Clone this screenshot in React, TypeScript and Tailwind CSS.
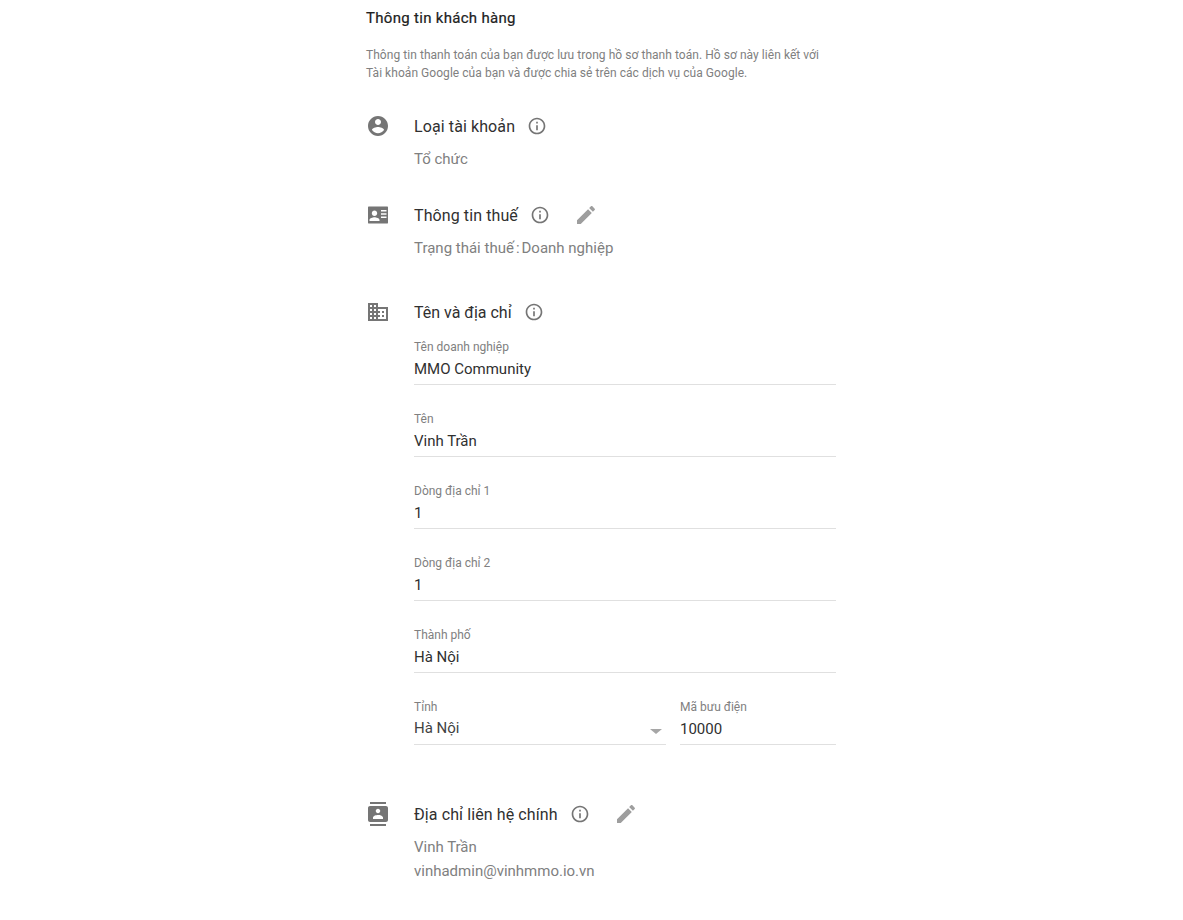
const paths = {
  account:
    'M12 2C6.48 2 2 6.48 2 12s4.48 10 10 10 10-4.48 10-10S17.52 2 12 2zm0 3c1.66 0 3 1.34 3 3s-1.34 3-3 3-3-1.34-3-3 1.34-3 3-3zm0 14.2c-2.5 0-4.71-1.28-6-3.22.03-1.99 4-3.08 6-3.08 1.99 0 5.97 1.09 6 3.08-1.29 1.94-3.5 3.22-6 3.22z',
  info: 'M11 7h2v2h-2zm0 4h2v6h-2zm1-9C6.48 2 2 6.48 2 12s4.48 10 10 10 10-4.48 10-10S17.52 2 12 2zm0 18c-4.41 0-8-3.59-8-8s3.59-8 8-8 8 3.59 8 8-3.59 8-8 8z',
  edit: 'M3 17.25V21h3.75L17.81 9.94l-3.75-3.75L3 17.25zM20.71 7.04c.39-.39.39-1.02 0-1.41l-2.34-2.34c-.39-.39-1.02-.39-1.41 0l-1.83 1.83 3.75 3.75 1.83-1.83z',
  tax: 'M21 3.500H3C2 3.500 2 4 2 5v14c0 1 0 1.500 1 1.500h18c1 0 1-.5 1-1.500V5c0-1 0-1.500-1-1.500zM8.500 7.500c1.500 0 2.700 1.200 2.700 2.700s-1.200 2.700-2.700 2.700-2.700-1.200-2.700-2.700 1.200-2.700 2.700-2.700zm5 10.500H3.500v-1c0-1.800 3.300-2.700 5-2.700s5 .9 5 2.700v1zm7-9.500h-5.500V7h5.500v1.500zm0 3.200h-5.500v-1.500h5.500v1.500zm0 3.200h-5.500v-1.500h5.500v1.500z',
  domain:
    'M12 7V3H2v18h20V7H12zM6 19H4v-2h2v2zm0-4H4v-2h2v2zm0-4H4V9h2v2zm0-4H4V5h2v2zm4 12H8v-2h2v2zm0-4H8v-2h2v2zm0-4H8V9h2v2zm0-4H8V5h2v2zm10 12h-8v-2h2v-2h-2v-2h2v-2h-2V9h8v10zm-2-8h-2v2h2v-2zm0 4h-2v2h2v-2z',
  contacts:
    'M20 0H4v2h16V0zM4 24h16v-2H4v2zM20 4H4c-1.100 0-2 .9-2 2v12c0 1.100.9 2 2 2h16c1.100 0 2-.9 2-2V6c0-1.100-.9-2-2-2zm-8 2.750c1.240 0 2.250 1.010 2.250 2.250s-1.010 2.250-2.250 2.250S9.750 10.240 9.750 9 10.760 6.750 12 6.750zM17 17H7v-1.500c0-1.670 3.330-2.500 5-2.500s5 .83 5 2.500V17z',
};

function Icon({ d, className }: { d: string; className: string }) {
  return (
    <svg viewBox="0 0 24 24" className={className} fill="currentColor">
      <path d={d} />
    </svg>
  );
}

function SectionHead({ icon, title, edit, tight }: { icon: string; title: string; edit?: boolean; tight?: boolean }) {
  return (
    <div className="flex items-center h-6">
      <div className="w-12 shrink-0">
        <Icon d={icon} className="w-6 h-6 text-[#757575]" />
      </div>
      <span className={`text-base pt-[2px] text-[#303030] ${tight ? 'tracking-[0px]' : 'tracking-[0.1px]'}`}>{title}</span>
      <Icon d={paths.info} className="w-5 h-5 ml-3 text-[#757575]" />
      {edit && <Icon d={paths.edit} className="w-6 h-6 ml-6 text-[#9e9e9e]" />}
    </div>
  );
}

function Field({ label, value, className, valueClass }: { label: string; value: string; className?: string; valueClass?: string }) {
  return (
    <div className={`h-[46px] border-b border-[#e0e0e0] ${className ?? ''}`}>
      <div className="text-xs leading-4 text-[#808080]">{label}</div>
      <div className={`text-[15px] leading-6 ${valueClass ?? 'mt-[2px] text-[#303030]'}`}>{value}</div>
    </div>
  );
}

export default function App() {
  return (
    <div className="min-h-[920px] bg-white font-['Roboto',sans-serif] pl-[366px] overflow-hidden">
      <div className="w-[470px]">
        <h2 className="text-[15px] leading-5 font-normal tracking-[0.3px] [-webkit-text-stroke:0.2px_#212121] text-[#212121] pt-[8px]">
          Thông tin khách hàng
        </h2>

        <p className="mt-[18px] text-xs leading-[18px] tracking-[0.05px] text-[#808080]">
          Thông tin thanh toán của bạn được lưu trong hồ sơ thanh toán. Hồ sơ này liên kết với
          <br />
          Tài khoản Google của bạn và được chia sẻ trên các dịch vụ của Google.
        </p>

        <section className="mt-[32px]">
          <SectionHead icon={paths.account} title="Loại tài khoản" />
          <div className="pl-12 mt-[9px] text-[15px] leading-6 text-[#808080]">Tổ chức</div>
        </section>

        <section className="mt-[32px]">
          <SectionHead icon={paths.tax} title="Thông tin thuế" edit />
          <div className="pl-12 mt-[9px] text-[15px] leading-6 text-[#808080]">
            Trạng thái thuế<span className="mx-[2px]">:</span>Doanh nghiệp
          </div>
        </section>

        <section className="mt-[40px]">
          <SectionHead icon={paths.domain} title="Tên và địa chỉ" tight />
          <div className="pl-12 mt-[15px] flex flex-col gap-[26px]">
            <Field label="Tên doanh nghiệp" value="MMO Community" />
            <Field label="Tên" value="Vinh Trần" />
            <Field label="Dòng địa chỉ 1" value="1" />
            <Field label="Dòng địa chỉ 2" value="1" />
            <Field label="Thành phố" value="Hà Nội" />
            <div className="flex gap-[14px]">
              <div className="relative w-[252px]">
                <Field label="Tỉnh" value="Hà Nội" valueClass="mt-[1px] text-[#424242]" />
                <span className="absolute right-[4px] top-[30px] w-0 h-0 border-x-[6px] border-x-transparent border-t-[5px] border-t-[#a6a6a6]" />
              </div>
              <Field label="Mã bưu điện" value="10000" className="w-[156px]" />
            </div>
          </div>
        </section>

        <section className="mt-[57px]">
          <SectionHead icon={paths.contacts} title="Địa chỉ liên hệ chính" edit />
          <div className="pl-12 mt-[9px] text-[15px] leading-6 text-[#808080]">
            <div>Vinh Trần</div>
            <div>vinhadmin@vinhmmo.io.vn</div>
          </div>
        </section>
      </div>
    </div>
  );
}
